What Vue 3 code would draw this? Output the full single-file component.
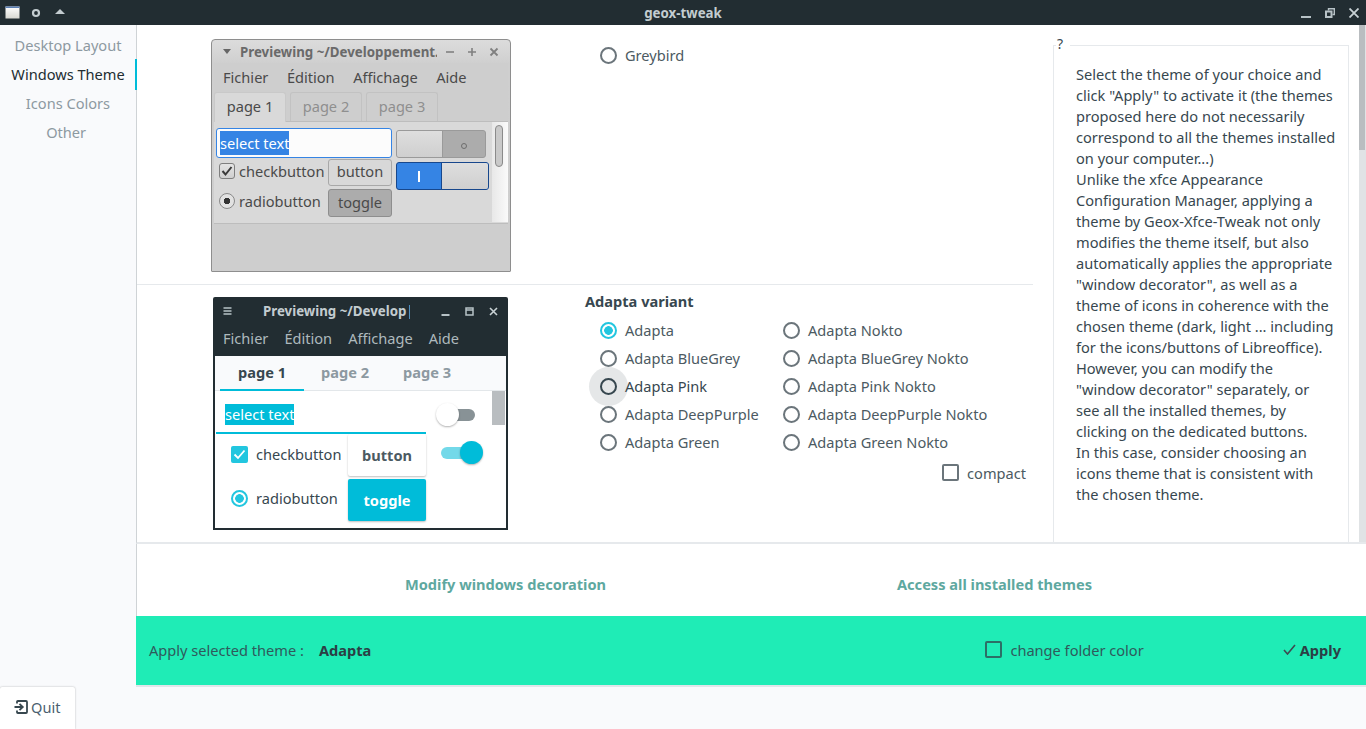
<script setup>
// left menu of the tweak tool
const menu = [
  { label: "Desktop Layout", active: false },
  { label: "Windows Theme", active: true },
  { label: "Icons Colors", active: false },
  { label: "Other ", active: false },
];

// variant radios, one column after the other
const variants = [
  { label: "Adapta", checked: true },
  { label: "Adapta Nokto" },
  { label: "Adapta BlueGrey" },
  { label: "Adapta BlueGrey Nokto" },
  { label: "Adapta Pink", hover: true },
  { label: "Adapta Pink Nokto" },
  { label: "Adapta DeepPurple" },
  { label: "Adapta DeepPurple Nokto" },
  { label: "Adapta Green" },
  { label: "Adapta Green Nokto" },
];

// line breaks are kept with white-space: pre-line
const helpText = `Select the theme of your choice and
click "Apply" to activate it (the themes
proposed here do not necessarily
correspond to all the themes installed
on your computer...)
Unlike the xfce Appearance
Configuration Manager, applying a
theme by Geox-Xfce-Tweak not only
modifies the theme itself, but also
automatically applies the appropriate
"window decorator", as well as a
theme of icons in coherence with the
chosen theme (dark, light ... including
for the icons/buttons of Libreoffice).
However, you can modify the
"window decorator" separately, or
see all the installed themes, by
clicking on the dedicated buttons.
In this case, consider choosing an
icons theme that is consistent with
the chosen theme.`;
</script>

<template>
  <div class="window">
    <header class="titlebar">
      <div class="tb-left">
        <svg width="15" height="13" viewBox="0 0 15 13">
          <defs>
            <linearGradient id="wicon" x1="0" y1="0" x2="0" y2="1">
              <stop offset="0" stop-color="#ffffff" />
              <stop offset="1" stop-color="#d8d8d2" />
            </linearGradient>
          </defs>
          <rect width="14" height="12" x="0.5" y="0.5" fill="url(#wicon)" />
          <rect width="14" height="1.5" x="0.5" y="0.5" fill="#5a7fb5" />
        </svg>
        <svg width="10" height="10" viewBox="0 0 10 10">
          <circle cx="5" cy="5" r="3" fill="none" stroke="#c3ccd0" stroke-width="2.2" />
        </svg>
        <svg width="12" height="7" viewBox="0 0 12 7">
          <path d="M6 1 L11 6 H1 Z" fill="#c3ccd0" />
        </svg>
      </div>
      <div class="tb-title">geox-tweak</div>
      <div class="tb-right">
        <svg width="10" height="10" viewBox="0 0 10 10">
          <rect x="0" y="8" width="10" height="2" fill="#b7c2c6" />
        </svg>
        <svg width="10" height="10" viewBox="0 0 10 10">
          <path d="M3.5 2.5 V0.7 H9.3 V6.5 H7.5" fill="none" stroke="#b7c2c6" stroke-width="1.4" />
          <rect x="1" y="3.5" width="5.5" height="5.5" fill="none" stroke="#b7c2c6" stroke-width="2" />
        </svg>
        <svg width="10" height="10" viewBox="0 0 10 10">
          <path d="M0.5 0.5 L9.5 9.5 M9.5 0.5 L0.5 9.5" stroke="#c9d2d5" stroke-width="1.8" />
        </svg>
      </div>
    </header>

    <div class="middle">
      <nav class="sidebar">
        <div v-for="item in menu" :key="item.label" class="nav-item" :class="{ active: item.active }">{{ item.label }}</div>
      </nav>

      <main class="content">
        <div class="top">
          <div class="themes">
            <section class="theme-row first">
              <div class="xf-win">
                <div class="xf-title">
                  <span class="xf-arrow"></span>
                  <span class="xf-name">Previewing ~/Developpement.</span>
                  <svg class="xf-btn" width="10" height="10" viewBox="0 0 10 10">
                    <path d="M1 5 H9" stroke="#808080" stroke-width="1.6" />
                  </svg>
                  <svg class="xf-btn" width="10" height="10" viewBox="0 0 10 10">
                    <path d="M1 5 H9 M5 1 V9" stroke="#808080" stroke-width="1.6" />
                  </svg>
                  <svg class="xf-btn" width="10" height="10" viewBox="0 0 10 10">
                    <path d="M1.5 1.5 L8.5 8.5 M8.5 1.5 L1.5 8.5" stroke="#808080" stroke-width="1.8" />
                  </svg>
                </div>
                <div class="xf-inner">
                  <div class="xf-menu">
                    <span>Fichier</span><span>Édition</span><span>Affichage</span><span>Aide</span>
                  </div>
                  <div class="xf-tabs">
                    <span class="xf-tab on">page 1</span>
                    <span class="xf-tab">page 2</span>
                    <span class="xf-tab">page 3</span>
                  </div>
                  <div class="xf-page">
                    <div class="xf-grid">
                      <div class="xf-entry"><span class="xf-sel">select text</span></div>
                      <div class="xf-switch off">
                        <span class="xf-knob"></span><span class="xf-state"><i class="xf-ring"></i></span>
                      </div>
                      <div class="xf-check c1">
                        <span class="xf-box">
                          <svg width="12" height="12" viewBox="0 0 12 12">
                            <path d="M1.5 6 L4.5 9.5 L10.5 2" fill="none" stroke="#3a3a3a" stroke-width="2" />
                          </svg>
                        </span>checkbutton
                      </div>
                      <div class="xf-button">button</div>
                      <div class="xf-switch on">
                        <span class="xf-state"><i class="xf-bar"></i></span><span class="xf-knob"></span>
                      </div>
                      <div class="xf-check c2">
                        <span class="xf-radio"></span>radiobutton
                      </div>
                      <div class="xf-button pressed">toggle</div>
                    </div>
                    <div class="xf-scroll"><span></span></div>
                  </div>
                </div>
              </div>
              <div class="single-choice">
                <label class="radio-line">
                  <span class="radio"></span>Greybird
                </label>
              </div>
            </section>

            <section class="theme-row second">
              <div class="ad-win">
                <div class="ad-title">
                  <svg width="9" height="8" viewBox="0 0 9 8">
                    <path d="M0.5 1 H8.5 M0.5 4 H8.5 M0.5 7 H8.5" stroke="#b7c2c6" stroke-width="1.6" />
                  </svg>
                  <span class="ad-name">Previewing ~/Develop|</span>
                  <svg class="ad-min" width="9" height="9" viewBox="0 0 9 9">
                    <rect x="0.5" y="7" width="8" height="2" fill="#b7c2c6" />
                  </svg>
                  <svg class="ad-max" width="9" height="9" viewBox="0 0 9 9">
                    <path d="M1 1 H8 V8 H1 Z M1 3 H8" fill="none" stroke="#b7c2c6" stroke-width="1.5" />
                  </svg>
                  <svg class="ad-close" width="9" height="9" viewBox="0 0 9 9">
                    <path d="M1 1 L8 8 M8 1 L1 8" stroke="#c9d2d5" stroke-width="1.6" />
                  </svg>
                </div>
                <div class="ad-menu">
                  <span>Fichier</span><span>Édition</span><span>Affichage</span><span>Aide</span>
                </div>
                <div class="ad-tabs">
                  <span class="ad-tab on">page 1</span>
                  <span class="ad-tab">page 2</span>
                  <span class="ad-tab">page 3</span>
                </div>
                <div class="ad-page">
                  <div class="ad-entry-row">
                    <div class="ad-entry"><span class="ad-sel">select text</span></div>
                    <div class="ad-switch off"><span class="ad-knob"></span></div>
                    <div class="ad-scroll"></div>
                  </div>
                  <div class="ad-row">
                    <div class="ad-check">
                      <span class="ad-box">
                        <svg width="13" height="11" viewBox="0 0 13 11">
                          <path d="M1.5 5.5 L5 9 L11.5 1.5" fill="none" stroke="#fff" stroke-width="1.8" />
                        </svg>
                      </span>checkbutton
                    </div>
                    <div class="ad-button">button</div>
                    <div class="ad-switch on"><span class="ad-knob"></span></div>
                  </div>
                  <div class="ad-row toggle-row">
                    <div class="ad-check">
                      <span class="radio checked"></span>radiobutton
                    </div>
                    <div class="ad-button pressed">toggle</div>
                  </div>
                </div>
              </div>

              <div class="variant-block">
                <h4 class="variant-head">Adapta variant</h4>
                <div class="variant-grid">
                  <label v-for="v in variants" :key="v.label" class="radio-line" :class="{ hovered: v.hover }">
                    <span class="radio" :class="{ checked: v.checked }"></span><span class="radio-text">{{ v.label }}</span>
                  </label>
                </div>
                <label class="compact"><span class="check-box"></span>compact</label>
              </div>
            </section>
          </div>

          <aside class="help">
            <span class="help-legend">?</span>
            <div class="help-text">{{ helpText }}</div>
          </aside>

          <div class="scrollbar"><span></span></div>
        </div>

        <div class="links">
          <a class="link left">Modify windows decoration</a>
          <a class="link right">Access all installed themes</a>
        </div>

        <div class="apply-bar">
          <span class="apply-label">Apply selected theme :</span>
          <strong class="apply-theme">Adapta</strong>
          <label class="folder"><span class="check-box"></span>change folder color</label>
          <button class="apply-btn">
            <svg width="13" height="11" viewBox="0 0 13 11">
              <path d="M1 6 L4.5 10 L12 1" fill="none" stroke="#3d4a50" stroke-width="1.6" />
            </svg>
            Apply
          </button>
        </div>
      </main>
    </div>

    <footer class="footer">
      <button class="quit">
        <svg width="14" height="14" viewBox="0 0 14 14">
          <path d="M3 3.5 V1.8 Q3 1 3.8 1 H12 Q13 1 13 2 V12 Q13 13 12 13 H3.8 Q3 13 3 12.2 V10.5" fill="none" stroke="#37474f" stroke-width="1.8" />
          <path d="M0.5 7 H8.5 M5.5 3.8 L8.8 7 L5.5 10.2" fill="none" stroke="#37474f" stroke-width="1.8" />
        </svg>
        Quit
      </button>
    </footer>
  </div>
</template>

<style>
html,
body {
  margin: 0;
  overflow: hidden;
}
</style>

<style scoped>
.window {
  width: 1366px;
  height: 729px;
  display: flex;
  flex-direction: column;
  background: #f9fafc;
  color: #4c5a62;
  font-family: "Noto Sans", sans-serif;
  font-size: 14.6px;
  overflow: hidden;
}

/* title bar */
.titlebar {
  height: 25px;
  flex: none;
  display: flex;
  align-items: center;
  background: #222d32;
  position: relative;
}
.tb-left {
  display: flex;
  align-items: center;
  gap: 11px;
  padding-left: 5px;
}
.tb-left svg:nth-child(3) {
  margin-left: 2px;
  margin-top: -2px;
}
.tb-title {
  position: absolute;
  left: 0;
  right: 0;
  text-align: center;
  font-size: 13.3px;
  font-weight: 700;
  color: #c3ccd0;
}
.tb-right {
  margin-left: auto;
  display: flex;
  align-items: center;
  gap: 14px;
  padding: 1px 7px 0 0;
}

.middle {
  flex: 1;
  display: flex;
  min-height: 0;
}

/* left menu */
.sidebar {
  width: 136px;
  flex: none;
  box-sizing: border-box;
  padding-top: 6px;
  background: #f9fafc;
  position: relative;
  z-index: 1;
}
.nav-item {
  height: 29px;
  line-height: 29px;
  text-align: center;
  color: #8d99a1;
  position: relative;
  white-space: pre;
}
.nav-item.active {
  color: #222d32;
}
.nav-item.active::after {
  content: "";
  position: absolute;
  right: -1px;
  top: -1px;
  bottom: -1px;
  width: 2px;
  background: #00bcd9;
}

.content {
  flex: 1;
  min-width: 0;
  display: flex;
  flex-direction: column;
  background: #fff;
}
.top {
  height: 519px;
  flex: none;
  display: flex;
  border-bottom: 2px solid #e6e9ec;
  border-left: 1px solid #cfd3d6;
  box-sizing: border-box;
  overflow: hidden;
}
.themes {
  width: 896px;
  flex: none;
}
.theme-row {
  display: flex;
  box-sizing: border-box;
}
.theme-row.first {
  height: 260px;
  padding: 14px 0 0 74px;
  border-bottom: 1px solid #e6e9ec;
}
.theme-row.second {
  height: 258px;
  padding-left: 76px;
}

/* xfce style preview */
.xf-win {
  width: 300px;
  height: 233px;
  box-sizing: border-box;
  border: 1px solid #8e8e8e;
  border-radius: 4px 4px 1px 1px;
  background: linear-gradient(#dcdcdc, #cfcfcf 24px, #cecece);
  display: flex;
  flex-direction: column;
  color: #4a4a4a;
  flex: none;
}
.xf-title {
  height: 23px;
  flex: none;
  display: flex;
  align-items: center;
  color: #6a6a6a;
  font-size: 13.3px;
  font-weight: 700;
  padding-left: 11px;
}
.xf-arrow {
  width: 0;
  height: 0;
  border-left: 4px solid transparent;
  border-right: 4px solid transparent;
  border-top: 5px solid #666;
  margin-right: 9px;
}
.xf-name {
  width: 197px;
  white-space: nowrap;
  overflow: hidden;
}
.xf-btn {
  margin-left: 12px;
  flex: none;
}
.xf-btn:first-of-type {
  margin-left: 8px;
}
.xf-inner {
  flex: 1;
  margin: 0 2px 2px;
  background: #cecece;
  display: flex;
  flex-direction: column;
  min-height: 0;
}
.xf-menu {
  height: 29px;
  box-sizing: border-box;
  padding: 0 0 2px 9px;
  flex: none;
  display: flex;
  align-items: center;
  gap: 18.5px;
}
.xf-tabs {
  height: 30px;
  flex: none;
  display: flex;
  gap: 4px;
  box-sizing: border-box;
  border-bottom: 1px solid #bdbdbd;
}
.xf-tab {
  width: 72px;
  box-sizing: border-box;
  text-align: center;
  line-height: 27px;
  color: #8f8f8f;
  border: 1px solid #c2c2c2;
  border-bottom: 0;
  border-radius: 3px 3px 0 0;
}
.xf-tab.on {
  color: #4a4a4a;
  background: #d9d9d9;
  border-color: #c9c9c9;
  height: 30px;
}
.xf-page {
  height: 102px;
  flex: none;
  display: flex;
  justify-content: space-between;
  background: #d9d9d9;
  border-bottom: 1px solid #bdbdbd;
  box-sizing: border-box;
}
.xf-grid {
  display: grid;
  grid-template-columns: 108px 64px 93px;
  grid-template-rows: 30px 27px 30px;
  column-gap: 4px;
  row-gap: 1px;
  padding: 6px 0 0 2px;
  align-items: center;
}
.xf-entry {
  grid-column: 1 / 3;
  height: 30px;
  box-sizing: border-box;
  border: 1px solid #3584e4;
  border-radius: 3px;
  background: #fcfcfc;
  display: flex;
  align-items: center;
  padding-left: 3px;
}
.xf-sel {
  background: #3584e4;
  color: #fff;
  line-height: 24px;
  height: 24px;
}
.xf-switch {
  display: flex;
  box-sizing: border-box;
  height: 28px;
  border-radius: 3px;
  align-items: stretch;
  overflow: hidden;
}
.xf-switch.off {
  width: 90px;
  background: #acacac;
  border: 1px solid #9a9a9a;
  align-self: end;
}
.xf-switch.on {
  width: 93px;
  background: #3584e4;
  border: 1px solid #17478c;
  grid-column: 3;
  grid-row: 2 / 4;
  align-self: start;
  margin-top: 3px;
}
.xf-knob {
  width: 45px;
  background: linear-gradient(#dedede, #cfcfcf);
  border-right: 1px solid #9a9a9a;
}
.xf-switch.on .xf-knob {
  width: 46px;
  border-right: 0;
  border-left: 1px solid #17478c;
}
.xf-state {
  flex: 1;
  display: flex;
  align-items: center;
  justify-content: center;
}
.xf-ring {
  width: 6px;
  height: 6px;
  box-sizing: border-box;
  border: 1px solid #6d6d6d;
  border-radius: 50%;
  margin-top: 3px;
}
.xf-bar {
  width: 2px;
  height: 11px;
  background: #fff;
}
.xf-check {
  display: flex;
  align-items: center;
  gap: 4px;
  padding-left: 3px;
  box-sizing: border-box;
  white-space: nowrap;
  height: 100%;
}
.xf-check.c1 {
  padding-bottom: 3px;
}
.xf-check.c2 {
  grid-row: 3;
  grid-column: 1;
  padding-bottom: 2px;
}
.xf-box {
  width: 16px;
  height: 16px;
  box-sizing: border-box;
  border: 1px solid #7f7f7f;
  border-radius: 3px;
  background: linear-gradient(#e4e4e4, #cfcfcf);
  display: flex;
  align-items: center;
  justify-content: center;
  flex: none;
}
.xf-radio {
  width: 16px;
  height: 16px;
  box-sizing: border-box;
  border: 1px solid #8a8a8a;
  border-radius: 50%;
  background: radial-gradient(circle, #333 0 3px, #e2e2e2 3.5px);
  flex: none;
}
.xf-button {
  height: 27px;
  box-sizing: border-box;
  border: 1px solid #a8a8a8;
  border-radius: 3px;
  background: #d8d8d8;
  text-align: center;
  line-height: 22px;
}
.xf-button.pressed {
  grid-row: 3;
  grid-column: 2;
  height: 28px;
  align-self: end;
  line-height: 24px;
  background: #acacac;
  border-color: #8e8e8e;
}
.xf-scroll {
  width: 16px;
  height: 100px;
  background: linear-gradient(90deg, #e8e8e8, #fafafa);
  flex: none;
  box-sizing: border-box;
  padding: 3px 0 0 3px;
}
.xf-scroll span {
  display: block;
  width: 8px;
  height: 42px;
  box-sizing: border-box;
  border: 1px solid #8a8a8a;
  border-radius: 4px;
  background: #c9c9c9;
}

/* adapta style preview */
.ad-win {
  width: 295px;
  height: 233px;
  margin-top: 12px;
  box-sizing: border-box;
  border: 2px solid #222d32;
  border-radius: 2px 2px 0 0;
  background: #fff;
  flex: none;
  display: flex;
  flex-direction: column;
  color: #37474f;
}
.ad-title {
  height: 27px;
  box-sizing: border-box;
  padding: 0 0 3px 8px;
  flex: none;
  background: #222d32;
  display: flex;
  align-items: center;
}
.ad-name {
  margin-left: 31px;
  width: 147px;
  white-space: nowrap;
  overflow: hidden;
  color: #c3ccd0;
  font-size: 13.3px;
  font-weight: 700;
}
.ad-min {
  margin-left: 31px;
}
.ad-max {
  margin-left: 15px;
}
.ad-close {
  margin-left: 15px;
}
.ad-menu {
  height: 30px;
  box-sizing: border-box;
  padding: 0 0 7px 8px;
  flex: none;
  background: #222d32;
  display: flex;
  align-items: center;
  gap: 16px;
  color: #aeb9bd;
}
.ad-tabs {
  height: 35px;
  flex: none;
  display: flex;
  padding-left: 5px;
  background: #f9fafc;
  box-sizing: border-box;
  border-bottom: 1px solid #e3e7ea;
}
.ad-tab {
  width: 82px;
  text-align: center;
  line-height: 33px;
  font-size: 14.6px;
  font-weight: 700;
  color: #8d99a1;
  box-sizing: border-box;
}
.ad-tab.on {
  width: 84px;
  color: #37474f;
  border-bottom: 2px solid #00bcd9;
  height: 35px;
}
.ad-page {
  flex: 1;
  min-height: 0;
}
.ad-entry-row {
  height: 43px;
  display: flex;
  position: relative;
}
.ad-entry {
  width: 210px;
  margin-left: 1px;
  height: 43px;
  box-sizing: border-box;
  border-bottom: 2px solid #00bcd9;
  padding: 13px 0 0 9px;
}
.ad-sel {
  display: inline-block;
  background: #00bcd9;
  color: #fff;
  line-height: 21px;
  height: 21px;
}
.ad-switch {
  position: relative;
  border-radius: 6px;
  flex: none;
}
.ad-switch.off {
  width: 30px;
  height: 12px;
  margin: 18px 0 0 19px;
  background: #889296;
}
.ad-switch.on {
  width: 27px;
  height: 12px;
  margin: 13px 0 0 15px;
  background: #73d9e9;
}
.ad-knob {
  position: absolute;
  width: 23px;
  height: 23px;
  top: -6px;
  border-radius: 50%;
  box-shadow: 0 1px 2px rgba(0, 0, 0, 0.3);
}
.ad-switch.off .ad-knob {
  left: -9px;
  background: #fff;
}
.ad-switch.on .ad-knob {
  right: -15px;
  background: #00bcd9;
}
.ad-scroll {
  width: 13px;
  height: 34px;
  background: #b9bdc0;
  position: absolute;
  top: 0;
  left: 277px;
}
.ad-row {
  display: flex;
  height: 42px;
}
.toggle-row {
  margin-top: 3px;
}
.ad-check {
  width: 133px;
  display: flex;
  align-items: center;
  gap: 8px;
  padding: 0 0 2px 16px;
  box-sizing: border-box;
  white-space: nowrap;
}
.toggle-row .ad-check {
  padding-bottom: 4px;
}
.ad-box {
  width: 17px;
  height: 17px;
  background: #22c6df;
  border-radius: 2px;
  display: flex;
  align-items: center;
  justify-content: center;
  flex: none;
}
.ad-button {
  width: 78px;
  height: 42px;
  line-height: 42px;
  text-align: center;
  font-weight: 700;
  font-size: 14.6px;
  background: #fff;
  border-radius: 2px;
  box-shadow: 0 1px 2px rgba(0, 0, 0, 0.25);
  color: #4c5a62;
  flex: none;
}
.ad-button.pressed {
  background: #00bcd9;
  color: #fff;
}

/* radios */
.single-choice {
  margin-left: 89px;
  padding-top: 2px;
}
.radio-line {
  height: 28px;
  display: flex;
  align-items: center;
  gap: 8px;
  white-space: nowrap;
  position: relative;
}
.radio {
  width: 17px;
  height: 17px;
  box-sizing: border-box;
  border: 2px solid #6b757b;
  border-radius: 50%;
  flex: none;
  background: #fff;
  position: relative;
}
.radio.checked {
  border-color: #22c6df;
  background: radial-gradient(circle, #22c6df 0 4px, #fff 4.6px);
}
.radio-text {
  position: relative;
}
.hovered {
  color: #37474f;
}
.hovered .radio {
  border-color: #37474f;
  background: transparent;
}
.hovered::before {
  content: "";
  position: absolute;
  left: -11px;
  top: -5px;
  width: 39px;
  height: 39px;
  border-radius: 50%;
  background: #e5e7e8;
}
.variant-block {
  margin-left: 77px;
  width: 448px;
  padding-top: 5px;
  position: relative;
}
.variant-head {
  margin: 0;
  font-size: 14.6px;
  font-weight: 700;
  color: #37474f;
  height: 22px;
  line-height: 22px;
}
.variant-grid {
  display: grid;
  grid-template-columns: 183px 1fr;
  padding: 4px 0 0 15px;
}
.compact {
  display: flex;
  align-items: center;
  justify-content: flex-end;
  gap: 8px;
  height: 33px;
  padding-right: 7px;
}
.check-box {
  width: 17px;
  height: 17px;
  box-sizing: border-box;
  border: 2px solid #6b757b;
  border-radius: 2px;
  flex: none;
}

/* help */
.help {
  width: 296px;
  margin-left: 20px;
  margin-top: 20px;
  flex: none;
  box-sizing: border-box;
  border-left: 1px solid #e6e9ec;
  border-right: 1px solid #e6e9ec;
  border-top: 1px solid #e6e9ec;
  position: relative;
  padding: 18px 0 0 22px;
  line-height: 21px;
  color: #37474f;
}
.help-text {
  white-space: pre-line;
}
.help-legend {
  position: absolute;
  left: 2px;
  top: -13px;
  padding: 0 3px 0 1px;
  background: #fff;
  color: #37474f;
  font-size: 14px;
  line-height: 21px;
  width: 10px;
}
.scrollbar {
  width: 8px;
  margin-left: 10px;
  flex: none;
  background: #e0e3e5;
}
.scrollbar span {
  display: block;
  width: 6px;
  height: 125px;
  background: #b9bdc0;
}

/* links */
.links {
  height: 72px;
  box-sizing: border-box;
  padding-top: 8px;
  flex: none;
  border-left: 1px solid #cfd3d6;
  display: flex;
  align-items: center;
}
.link {
  color: #5ea8a0;
  font-weight: 700;
  font-size: 14.6px;
  text-align: center;
  white-space: nowrap;
}
.link.left {
  width: 737px;
}
.link.right {
  width: 241px;
}

/* apply bar */
.apply-bar {
  height: 71px;
  flex: none;
  box-sizing: border-box;
  background: #1fecb6;
  border-bottom: 2px solid #e0e6ea;
  display: flex;
  align-items: center;
  padding: 0 25px 2px 13px;
  color: #2f5a5c;
}
.apply-label {
  width: 170px;
}
.apply-theme {
  color: #2b3f45;
  font-size: 14.6px;
}
.folder {
  display: flex;
  align-items: center;
  gap: 8px;
  margin-left: 614px;
}
.folder .check-box {
  border-color: #2c6f66;
}
.apply-btn {
  margin-left: auto;
  display: flex;
  align-items: center;
  gap: 4px;
  border: 0;
  background: none;
  padding: 0;
  font-family: inherit;
  font-size: 14.6px;
  font-weight: 700;
  color: #2b3f45;
}

/* footer */
.footer {
  height: 44px;
  flex: none;
  display: flex;
  align-items: flex-end;
}
.quit {
  width: 75px;
  height: 42px;
  box-sizing: border-box;
  border: 0;
  background: #fff;
  border-radius: 2px 2px 0 0;
  box-shadow: 0 0 2px rgba(0, 0, 0, 0.3);
  display: flex;
  align-items: center;
  gap: 3px;
  padding: 0 0 2px 14px;
  font-family: inherit;
  font-size: 14.6px;
  color: #4b5f70;
}
</style>
